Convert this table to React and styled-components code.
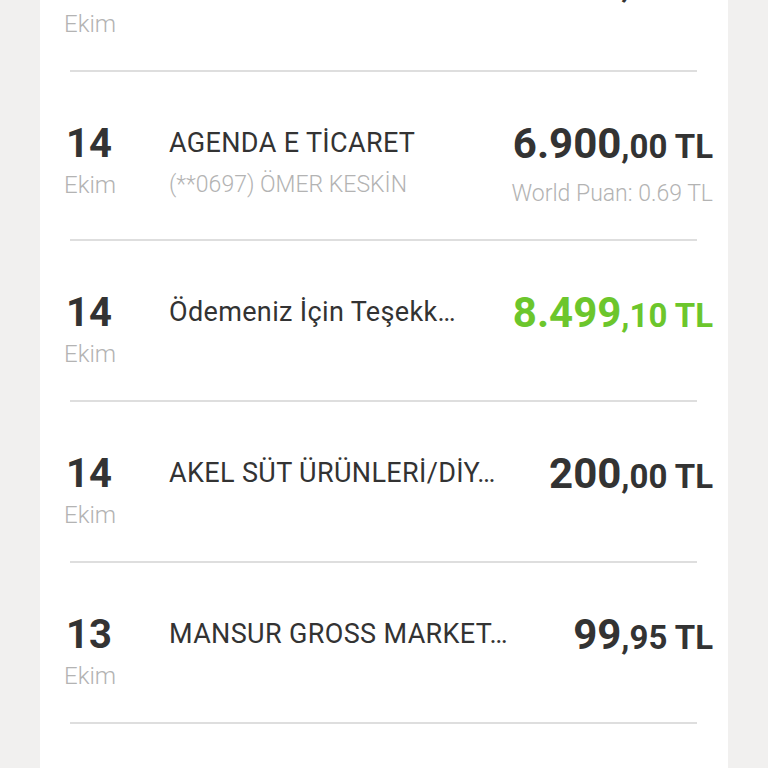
import styled, { createGlobalStyle } from "styled-components";

const GlobalStyle = createGlobalStyle`
  body {
    margin: 0;
    background: #f1f0ef;
    font-family: Roboto, "Noto Sans", "Liberation Sans", sans-serif;
    overflow: hidden;
  }
`;

// ekstre hareketleri (ilk satır ekranın üstünde kısmen kalıyor)
const transactions = [
  { day: "15", month: "Ekim", title: "MİGROS TİCARET A.Ş.", whole: "150", frac: ",00 TL" },
  {
    day: "14",
    month: "Ekim",
    title: "AGENDA E TİCARET",
    sub: "(**0697) ÖMER KESKİN",
    whole: "6.900",
    frac: ",00 TL",
    points: "World Puan: 0.69 TL",
  },
  { day: "14", month: "Ekim", title: "Ödemeniz İçin Teşekk…", whole: "8.499", frac: ",10 TL", payment: true },
  { day: "14", month: "Ekim", title: "AKEL SÜT ÜRÜNLERİ/DİY…", whole: "200", frac: ",00 TL" },
  { day: "13", month: "Ekim", title: "MANSUR GROSS MARKET…", whole: "99", frac: ",95 TL" },
  { day: "13", month: "Ekim", title: "ŞOK MARKETLER", whole: "42", frac: ",50 TL" },
];

const App = () => {
  return (
    <>
      <GlobalStyle />
      <Card>
        {transactions.map((t, i) => (
          <Row key={i}>
            <RowContent>
              <DateCol>
                <Day>{t.day}</Day>
                <Month>{t.month}</Month>
              </DateCol>
              <InfoCol>
                <Title>{t.title}</Title>
                {t.sub && <SubTitle>{t.sub}</SubTitle>}
              </InfoCol>
              <AmountCol>
                <Amount $payment={t.payment}>
                  {t.whole}
                  <Fraction>{t.frac}</Fraction>
                </Amount>
                {t.points && <Points>{t.points}</Points>}
              </AmountCol>
            </RowContent>
            <Divider />
          </Row>
        ))}
      </Card>
    </>
  );
};

const Card = styled.div`
  background: #ffffff;
  margin: -89px 40px 0 40px;
  min-height: 900px;
`;

const Row = styled.div`
  display: flex;
  flex-direction: column;
`;

const RowContent = styled.div`
  display: flex;
  align-items: flex-start;
  padding: 50px 15px 31px 24px;
`;

const Divider = styled.div`
  height: 2px;
  background: #dedede;
  margin: 0 31px 0 30px;
`;

const DateCol = styled.div`
  width: 105px;
  flex-shrink: 0;
  display: flex;
  flex-direction: column;
`;

const Day = styled.div`
  font-size: 40px;
  line-height: 44px;
  font-weight: 700;
  color: #333333;
  padding-left: 2px;
`;

const Month = styled.div`
  margin-top: 4px;
  font-size: 24px;
  line-height: 30px;
  font-weight: 300;
  color: #b3b3b3;
`;

const InfoCol = styled.div`
  flex: 1;
  min-width: 0;
  display: flex;
  flex-direction: column;
`;

const Title = styled.div`
  margin-top: 5px;
  font-size: 27px;
  line-height: 32px;
  letter-spacing: 0.35px;
  color: #333333;
  white-space: nowrap;
`;

const SubTitle = styled.div`
  margin-top: 12px;
  font-size: 23px;
  line-height: 28px;
  font-weight: 300;
  color: #b3b3b3;
  white-space: nowrap;
`;

const AmountCol = styled.div`
  flex-shrink: 0;
  display: flex;
  flex-direction: column;
  align-items: flex-end;
`;

const Amount = styled.div`
  font-size: 42px;
  line-height: 44px;
  font-weight: 700;
  color: ${(p) => (p.$payment ? "#6cc62c" : "#333333")};
  white-space: nowrap;
`;

const Fraction = styled.span`
  font-size: 33px;
  line-height: 1;
`;

const Points = styled.div`
  margin-top: 14px;
  font-size: 23px;
  line-height: 28px;
  font-weight: 300;
  color: #b3b3b3;
`;

export default App;
